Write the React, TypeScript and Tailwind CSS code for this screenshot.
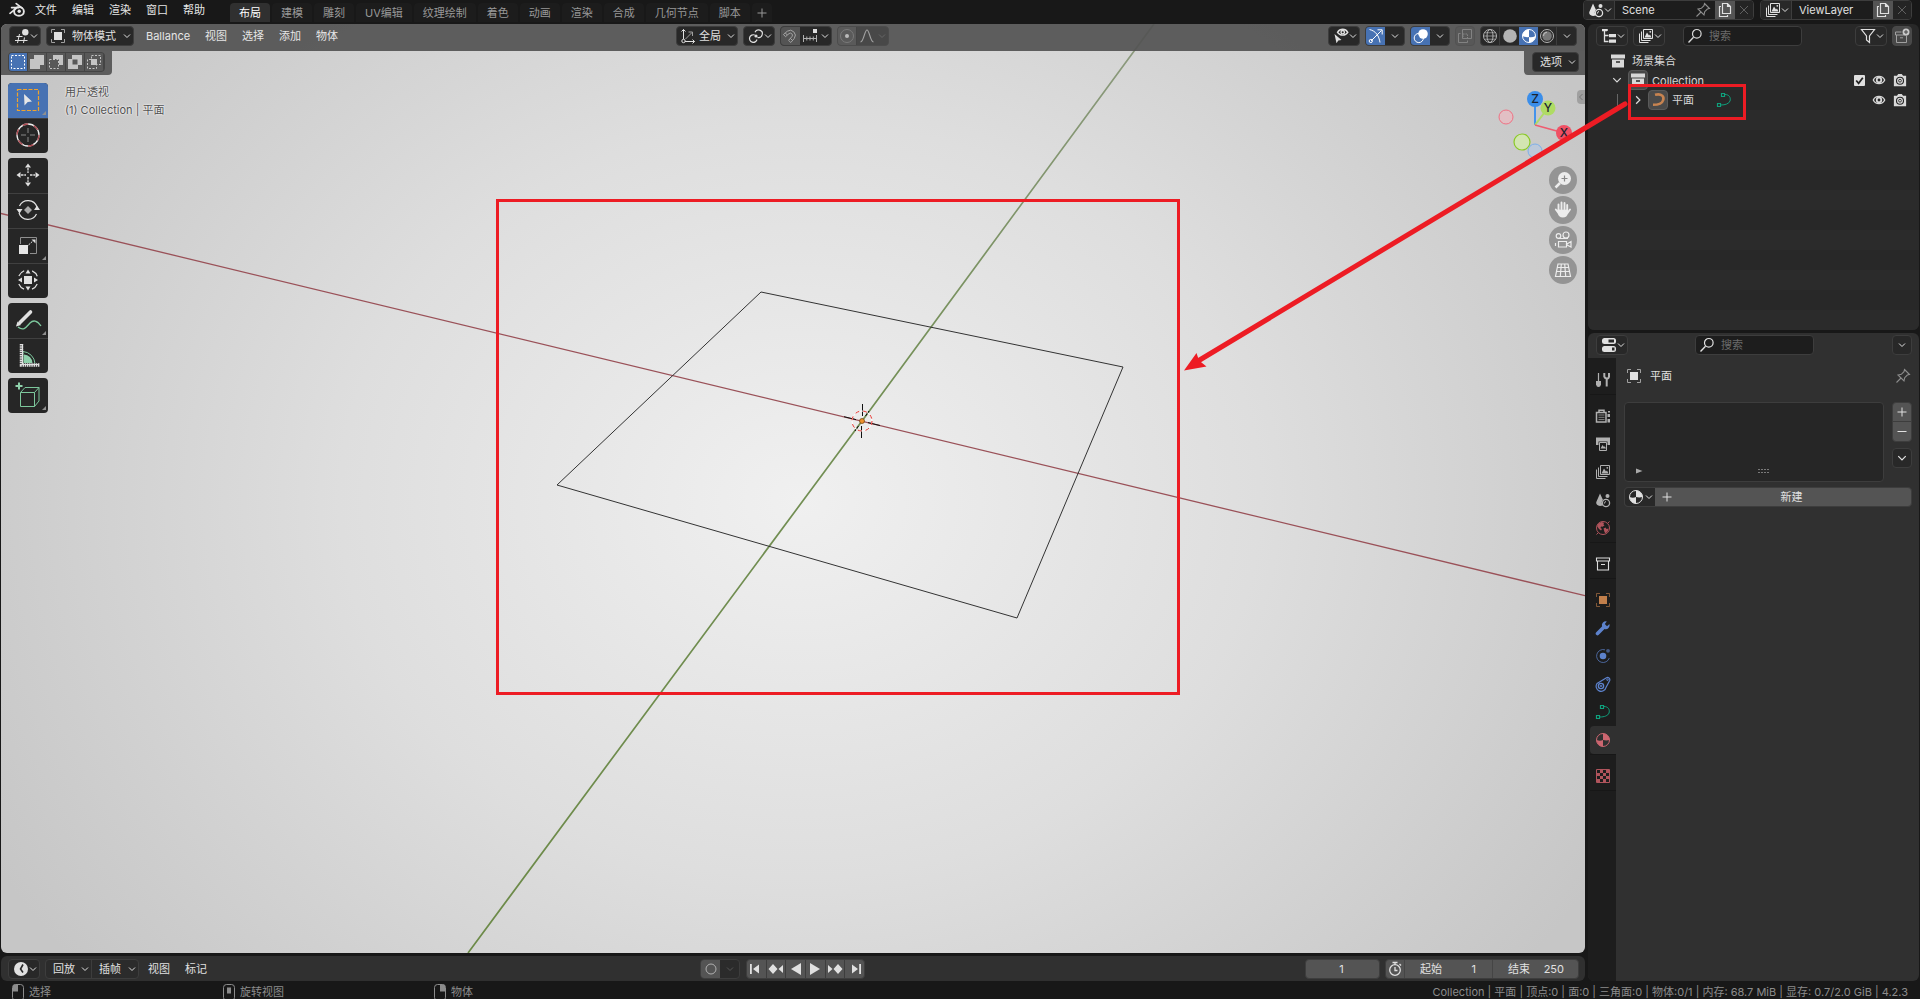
import React from 'react';

type IconProps = { className?: string; size?: number; box?: number; children: React.ReactNode };

function Icon({ className = '', size = 16, box = 16, children }: IconProps) {
  return (
    <svg
      width={size}
      height={size}
      viewBox={`0 0 ${box} ${box}`}
      fill="none"
      stroke="currentColor"
      strokeWidth="1"
      className={`shrink-0 ${className}`}
      aria-hidden="true"
    >
      {children}
    </svg>
  );
}

const Chevron = ({ className = '', size = 8 }: { className?: string; size?: number }) => (
  <Icon size={size} box={8} className={className}>
    <path d="M1 2.500 4 5.500 7 2.500" />
  </Icon>
);

const Blender = () => (
  <Icon size={18} box={18}>
    <path d="M2 12.300 9.400 6.400M3.600 6.600h7M8.200 2.600l6 4.600" strokeWidth="1.700" strokeLinecap="round" />
    <ellipse cx="11" cy="10.400" rx="4.900" ry="4.300" strokeWidth="1.900" />
    <circle cx="11.200" cy="10.200" r="1.700" fill="currentColor" stroke="none" />
  </Icon>
);
const EditorGrid = () => (
  <Icon>
    <path d="M1 12.500h12.500M2.500 8.500h6M5.500 6 3.500 15M10.500 9.500 9.500 15" />
    <circle cx="11.300" cy="4.300" r="3.200" fill="currentColor" stroke="none" />
  </Icon>
);
const ObjectMode = () => (
  <Icon>
    <path d="M1.500 5V1.500H5M11 1.500h3.500V5M14.500 11v3.500H11M5 14.500H1.500V11" className="text-[#a0a0a0]" />
    <path d="M4 4h8v8H4z" fill="currentColor" stroke="none" />
  </Icon>
);
const Axes = () => (
  <Icon>
    <path d="M3.500 11V1.500M1.500 3.500l2-2 2 2M5 13.500h9.500M12.500 11.500l2 2-2 2" />
    <circle cx="3.500" cy="13" r="1.700" />
    <path d="M5.500 11 12 4.500M8.500 4H12.500v4" className="text-[#a0a0a0]" />
  </Icon>
);
const Pivot = () => (
  <Icon>
    <path d="M6.700 7A3.800 3.800 0 1 0 9 11.500M7 4.300A3.800 3.800 0 1 1 9.500 9.400" strokeWidth="1.200" />
    <circle cx="8" cy="8" r="1.600" fill="currentColor" stroke="none" />
  </Icon>
);
const Magnet = () => (
  <Icon className="text-[#a4a4a4]">
    <path d="M1.500 6.500 5.300 3.200a5.100 5.100 0 0 1 7 7.200L8.800 14.500 6.600 12.400 10 8.500A2.100 2.100 0 0 0 7 5.600L3.500 8.700zM3.300 4.900l2 2.100M8.300 10.300l2.200 2.200" />
  </Icon>
);
const SnapTo = () => (
  <Icon>
    <path d="M1.500 7v7M14.500 7v7M1.500 10.500h13M4.800 8.500v4M8 8.500v4M11.300 8.500v4" className="text-[#b0b0b0]" />
    <path d="M11 1h4v4h-4z" fill="currentColor" stroke="none" />
  </Icon>
);
const EyeCursor = () => (
  <Icon>
    <path d="M4.500 4.300C7 .3 12.500 .3 14.800 4.300 12.500 8 7 8 4.500 4.300z" strokeWidth="1.400" />
    <circle cx="9.700" cy="4.200" r="1.700" strokeWidth="1.400" />
    <path d="M1.500 6 8.500 12l-3.200.4-1.800 2.800z" fill="currentColor" stroke="none" />
  </Icon>
);
const Gizmo = () => (
  <Icon>
    <path d="M1.500 1.500C8 3 11 8 12 14.500M3 13 13.500 2.500M9.500 1.800h4.700v4.700" />
    <circle cx="2.800" cy="13" r="1.600" />
  </Icon>
);
const Overlay = () => (
  <Icon>
    <circle cx="5.800" cy="10" r="4.600" />
    <circle cx="10" cy="6" r="4.800" fill="currentColor" stroke="none" />
    <path d="M5.500 7.500a5 5 0 0 0 3.500 5" stroke="#4772b3" />
  </Icon>
);
const Xray = () => (
  <Icon className="text-[#828282]">
    <path d="M5.500 1.500h9v9h-9zM1.500 5.500v9h9v-2M1.500 5.500h2" />
    <path d="M6 6h4.500v4.500H6z" strokeDasharray="1.500 1" />
  </Icon>
);
const Wire = () => (
  <Icon className="text-[#b4b4b4]">
    <circle cx="8" cy="8" r="6.500" />
    <ellipse cx="8" cy="8" rx="3" ry="6.500" />
    <path d="M1.500 8h13M2.500 4.800h11M2.500 11.200h11" strokeWidth=".7" />
  </Icon>
);
const Solid = () => (
  <Icon className="text-[#b4b4b4]">
    <circle cx="8" cy="8" r="6.800" fill="currentColor" stroke="none" />
  </Icon>
);
const Material = () => (
  <Icon>
    <circle cx="8" cy="8" r="6.500" />
    <path d="M8 1.500A6.500 6.500 0 0 1 14.500 8Q11.500 8.800 8 8zM8 8Q5 9.500 1.500 8A6.500 6.500 0 0 0 8 14.500z" fill="currentColor" stroke="none" />
  </Icon>
);
const MaterialShade = () => (
  <Icon>
    <circle cx="8" cy="8" r="6.500" />
    <path d="M8 1.500A6.500 6.500 0 0 0 1.500 8Q5 9.500 8 9z" fill="currentColor" stroke="none" />
    <path d="M8 9q3 .8 6.500-1A6.500 6.500 0 0 1 8 14.500z" fill="currentColor" stroke="none" />
  </Icon>
);
const Rendered = () => (
  <Icon className="text-[#b4b4b4]">
    <circle cx="8" cy="8" r="6.500" />
    <circle cx="8" cy="8" r="4.800" fill="#777" stroke="none" />
    <path d="M4.500 8A3.500 3.500 0 0 1 8 4.300" strokeWidth="1.300" />
  </Icon>
);
const SceneIcon = () => (
  <Icon>
    <path d="M5 1.500 1.200 10.300Q1 13.500 5 14L8 13.500Q5.500 10 8 8z" fill="currentColor" stroke="none" />
    <circle cx="12.500" cy="4" r="2" fill="currentColor" stroke="none" />
    <circle cx="11" cy="11" r="3.600" strokeWidth="1.300" />
    <path d="M9.500 11.500a1.800 1.800 0 0 1 1.500-2" />
  </Icon>
);
const ViewLayerIcon = () => (
  <Icon>
    <path d="M5.500 1.500h9v9h-9zM3.500 3.500v9h9M1.500 5.500v9h9" />
    <path d="M6.500 9.500 9 4.500l2 3 1-1 1.500 3z" fill="currentColor" stroke="none" />
    <circle cx="12.300" cy="3.800" r=".9" fill="currentColor" stroke="none" />
  </Icon>
);
const Pin = () => (
  <Icon className="text-[#8c8c8c]">
    <path d="M9.500 1.500 14.500 6.500 12.300 7 9.700 9.700 9 13 3 7 6.300 6.300 9 3.700zM6 10 1.500 14.500" strokeWidth="1.100" />
  </Icon>
);
const Copy = () => (
  <Icon>
    <path d="M5.500 1.500h5l3 3v7h-8zM10.500 1.500v3h3M4 4.500H2.500v10h8V13" strokeWidth="1.200" />
  </Icon>
);
const Cross = () => (
  <Icon size={12} box={12} className="text-[#606060]">
    <path d="m2 2 8 8M10 2 2 10" />
  </Icon>
);
const Tree = () => (
  <Icon>
    <path d="M1 2h6M3.500 2v11.500h4M3.500 7.500h4" strokeWidth="1.300" />
    <path d="M1 1h5v2.200H1zM8 6h7v3.200H8zM8 11.500h7v3.200H8z" fill="currentColor" stroke="none" />
  </Icon>
);
const Search = () => (
  <Icon>
    <circle cx="9.800" cy="5.800" r="4.300" strokeWidth="1.200" />
    <path d="M6.500 9.200 1.500 14.500" strokeWidth="1.400" />
  </Icon>
);
const Funnel = () => (
  <Icon>
    <path d="M1.500 1.500h13L9.500 8v6.500L6.500 12V8z" strokeWidth="1.200" />
  </Icon>
);
const NewCollection = () => (
  <Icon className="text-[#a0a0a0]">
    <path d="M1.500 4h6M1.500 4v3h12M2.500 7v7.500h10V8M6 9.800h3" />
    <circle cx="12" cy="4" r="3.500" fill="#c8c8c8" stroke="none" />
    <path d="M12 2v4M10 4h4" stroke="#444" />
  </Icon>
);
const CollectionFull = () => (
  <Icon>
    <path d="M1 1.500h14v4H1z M2 6.500h12v8H2z" fill="currentColor" stroke="none" />
    <path d="M6 9h4" stroke="#282828" strokeWidth="1.600" />
  </Icon>
);
const CollectionLine = () => (
  <Icon>
    <path d="M1.500 2h13v3h-13zM2.500 5.500v8.500h11V5.500M6 8.500h4" strokeWidth="1.100" />
  </Icon>
);
const Eye = () => (
  <Icon size={14}>
    <path d="M1.500 8C4 2.500 12 2.500 14.500 8 12 13.500 4 13.500 1.500 8z" strokeWidth="1.500" />
    <circle cx="8" cy="8" r="2.600" strokeWidth="2" />
  </Icon>
);
const Camera = () => (
  <Icon size={14}>
    <path d="M1 3h3.500L6 1h4l1.500 2H15v12H1z" fill="currentColor" stroke="none" />
    <circle cx="8" cy="8.800" r="4" stroke="#282828" strokeWidth="1.300" />
    <circle cx="8" cy="8.800" r="1.600" stroke="#282828" />
  </Icon>
);
const CurveObject = () => (
  <Icon className="text-[#c78350]">
    <path d="M5 2.800C12 1 14.500 5 13 8.500 12 12 8 12.800 3 12.800" strokeWidth="2.600" />
  </Icon>
);
const CurveData = ({ className = '' }: { className?: string }) => (
  <Icon className={`text-[#0fa07c] ${className}`}>
    <path d="M5.500 1.500h3v3h-3zM1.500 11.500h3v3h-3z" strokeWidth="1.200" />
    <path d="M9 2.500C13.500 2.500 15 6 14 9c-1 2.800-5 4-9 4" />
  </Icon>
);
const Props = () => (
  <Icon>
    <rect x="1" y="1" width="14" height="6" rx="2.500" fill="currentColor" stroke="none" />
    <rect x="1" y="9" width="14" height="6" rx="2.500" fill="currentColor" stroke="none" />
    <path d="M7.500 2.500h5.500v3H7.500zM11 10.500h2.500v3H11z" fill="#282828" stroke="none" />
  </Icon>
);
const Tool = () => (
  <Icon>
    <path d="M3.500 1v8" strokeWidth="1.200" />
    <path d="M1 9h5v3.500Q5.500 15 3.500 15T1 12.500z" fill="currentColor" stroke="none" />
    <path d="M9.300 1v3.500Q9.500 6 11.500 6.500T14 4.500V1M11.700 6v8.500" strokeWidth="2" />
  </Icon>
);
const RenderTab = () => (
  <Icon>
    <path d="M1.500 4.500h9.500v9.500H1.500z" strokeWidth="1.500" />
    <path d="M4 4V2.200h5V4" strokeWidth="1.500" />
    <path d="M3.500 7h6M3.500 9.300h6M3.500 11.600h6" strokeWidth=".7" />
    <path d="M13 3h2v1.500h-2zM12.500 6H15v3h-2.500zM12.500 11H15v3.500h-2.500z" fill="currentColor" stroke="none" />
  </Icon>
);
const OutputTab = () => (
  <Icon>
    <path d="M1 1.500h14V9h-2.500V5.500h-9V9H1z" fill="currentColor" stroke="none" />
    <path d="M4.500 6.500h7v8h-7z" />
    <path d="M5.500 12.500 7.500 9l1.500 2 .8-.7 1.200 2.200z" fill="currentColor" stroke="none" />
  </Icon>
);
const World = () => (
  <Icon className="text-[#b0545c]">
    <circle cx="8" cy="8" r="6.500" />
    <path d="M2 6 3.500 3.500 6.500 2l2.500.8-.5 1.700 1 1-2 1.300-1.500-.3-.5 1.500 1.500 1-1 1.500L4 9z" fill="currentColor" stroke="none" />
    <path d="m8.500 8.500 2-1 1 1.500 2-.5-.5 2.500-2.500 2.500-1-1.500z" fill="currentColor" stroke="none" />
    <path d="m1.500 14.500 1.800-1.800M12.700 3.300l1.800-1.800" />
  </Icon>
);
const ObjectTab = () => (
  <Icon className="text-[#c17f4b]">
    <path d="M1.500 5V1.500H5M11 1.500h3.500V5M14.500 11v3.500H11M5 14.500H1.500V11" opacity=".6" />
    <path d="M4 4h8v8H4z" fill="currentColor" stroke="none" />
  </Icon>
);
const Wrench = () => (
  <Icon className="text-[#5d82cc]">
    <path d="M2.500 13.500 8.500 7.500" strokeWidth="3.600" strokeLinecap="round" />
    <path d="M11.800 1.500A4 4 0 0 0 7 6.500L9.500 9a4 4 0 0 0 5-5L12 6.300 9.800 4z" fill="currentColor" stroke="none" />
  </Icon>
);
const Physics = () => (
  <Icon className="text-[#5d82cc]">
    <circle cx="8" cy="8" r="3.300" fill="currentColor" stroke="none" />
    <path d="M10 1.800A6.500 6.500 0 1 0 14.300 10" opacity=".7" />
    <circle cx="13" cy="2.800" r="1.900" fill="currentColor" stroke="none" opacity=".6" />
  </Icon>
);
const Constraint = () => (
  <Icon className="text-[#5d82cc]">
    <circle cx="6" cy="10" r="2.600" strokeWidth="1.400" />
    <circle cx="6" cy="10" r="1" fill="currentColor" stroke="none" />
    <path d="M2 7.500 11.500 1.700a2.300 2.300 0 0 1 3.200 2.800L11 11.500A5 5 0 1 1 2 7.500z" strokeWidth="1.200" />
    <circle cx="12.500" cy="3.700" r=".8" />
  </Icon>
);
const MaterialTab = () => (
  <Icon className="text-[#cc6670]">
    <circle cx="8" cy="8" r="6.500" />
    <path d="M8 1.500A6.500 6.500 0 0 1 14.500 8Q11.500 8.800 8 8zM8 8Q5 9.500 1.500 8A6.500 6.500 0 0 0 8 14.500z" fill="currentColor" stroke="none" />
  </Icon>
);
const Texture = () => (
  <Icon className="text-[#b0545c]">
    <path d="M1.500 1.500h13v13h-13z" />
    <path
      d="M5 2h3v3H5zM11 2h3v3h-3zM2 5h3v3H2zM8 5h3v3H8zM5 8h3v3H5zM11 8h3v3h-3zM2 11h3v3H2zM8 11h3v3H8z"
      fill="currentColor"
      stroke="none"
    />
  </Icon>
);
const Clock = () => (
  <Icon>
    <circle cx="8" cy="8" r="7" fill="currentColor" stroke="none" />
    <path d="M10 3.500 7.500 8 10 11.500" stroke="#282828" strokeWidth="1.600" />
  </Icon>
);
const Stopwatch = () => (
  <Icon>
    <circle cx="8" cy="9" r="5.300" strokeWidth="1.300" />
    <path d="M8 6v3.500h2.500M5.500 1.500h5M8 1.500v2M12.500 3l1.500 1.500" strokeWidth="1.300" />
  </Icon>
);

const boxed = 'flex h-5 items-center rounded border border-[#3d3d3d] bg-[#282828] text-[#e0e0e0]';

function MenuButton({ label, className = 'w-8', children }: { label: string; className?: string; children: React.ReactNode }) {
  return (
    <button type="button" aria-label={label} className={`${boxed} shrink-0 justify-between pr-0.5 pl-1 ${className}`}>
      {children}
      <Chevron />
    </button>
  );
}

function SearchBox({ id, className }: { id: string; className: string }) {
  return (
    <label htmlFor={id} className={`flex h-5 items-center gap-1.5 rounded border border-[#3d3d3d] bg-[#1d1d1d] pl-[3px] ${className}`}>
      <Search />
      <input id={id} type="search" aria-label="搜索" placeholder="搜索" className="w-full min-w-0 bg-transparent outline-none placeholder:text-[#6a6a6a]" />
    </label>
  );
}

const workspaces = ['布局', '建模', '雕刻', 'UV编辑', '纹理绘制', '着色', '动画', '渲染', '合成', '几何节点', '脚本'];

function DataBlock({ id, value, className, pin, icon }: { id: string; value: string; className: string; pin?: boolean; icon: React.ReactNode }) {
  return (
    <div className={`flex h-5 items-center overflow-hidden rounded border border-[#3d3d3d] bg-[#1d1d1d] ${className}`}>
      <button type="button" aria-label={`浏览 ${value}`} className="flex h-full w-[31px] shrink-0 items-center justify-between border-r border-[#3d3d3d] bg-[#282828] pr-0.5 pl-1">
        {icon}
        <Chevron />
      </button>
      <input id={id} aria-label={value} defaultValue={value} className="w-full min-w-0 flex-1 bg-transparent pl-[7px] outline-none" />
      {pin && (
        <button type="button" aria-label="固定" className="mr-1"><Pin /></button>
      )}
      <button type="button" aria-label="新建副本" className="flex h-full w-5 items-center justify-center bg-[#545454]"><Copy /></button>
      <button type="button" aria-label="删除" className="flex h-full w-[18px] items-center justify-center bg-[#242424]"><Cross /></button>
    </div>
  );
}

function TopBar() {
  return (
    <header className="flex h-6 shrink-0 justify-between pr-2">
      <div className="flex">
        <nav className="flex h-5 items-center gap-[15px] pl-2 text-[#e6e6e6]">
          <button type="button" aria-label="Blender" className="-mr-[6px]"><Blender /></button>
          {['文件', '编辑', '渲染', '窗口', '帮助'].map((t) => (
            <button key={t} type="button">{t}</button>
          ))}
        </nav>
        <nav className="ml-[25px] flex items-start gap-0.5 pt-[3px] text-[#989898]">
          {workspaces.map((t, i) => (
            <button key={t} type="button" className={`h-[19px] rounded-t px-[9px] ${i === 0 ? 'bg-[#303030] text-white' : 'bg-[#1c1c1c]'}`}>
              {t}
            </button>
          ))}
          <button type="button" aria-label="添加工作区" className="flex h-[19px] w-5 items-center justify-center rounded-t bg-[#1c1c1c]">
            <Icon size={10} box={10}><path d="M5 .5v9M.5 5h9" /></Icon>
          </button>
        </nav>
      </div>
      <div className="flex gap-1.5">
        <DataBlock id="scene" value="Scene" pin icon={<SceneIcon />} className="w-[171px]" />
        <DataBlock id="layer" value="ViewLayer" icon={<ViewLayerIcon />} className="w-[152px]" />
      </div>
    </header>
  );
}

function Scene3D() {
  return (
    <svg className="absolute inset-0 h-full w-full" viewBox="1 24 1584 929" preserveAspectRatio="none" fill="none" aria-hidden="true">
      <defs>
        <radialGradient id="studio" gradientUnits="userSpaceOnUse" cx="800" cy="500" r="920" gradientTransform="translate(0 90) scale(1 .82)">
          <stop offset="0" stopColor="#f0f0f0" />
          <stop offset=".5" stopColor="#dedede" />
          <stop offset="1" stopColor="#c6c6c6" />
        </radialGradient>
        <linearGradient id="axisY" gradientUnits="userSpaceOnUse" x1="468" y1="953" x2="1154" y2="24">
          <stop offset="0" stopColor="#6c8a48" />
          <stop offset=".6" stopColor="#738f55" />
          <stop offset="1" stopColor="#8d9a80" />
        </linearGradient>
      </defs>
      <path d="M1 24h1584v929H1z" fill="url(#studio)" />
      <path d="M0 213.300 1585 595.700" stroke="#9a5158" strokeWidth="1.300" />
      <path d="M468 953 862 421 1154 24" stroke="url(#axisY)" strokeWidth="1.700" />
      <path d="M761 292 1123 367 1017 618 557 485z" stroke="#333" strokeWidth="1" />
      <path d="M844 416.700 856 419.600M868 422.600 880 425.500M855 431l3.500-5M865.500 416l3.500-5M862.500 404v12M861.500 426v12" stroke="#111" />
      <circle cx="862" cy="421" r="10" stroke="#fff" strokeWidth="1" />
      <circle cx="862" cy="421" r="10" stroke="#e5342f" strokeWidth="1" strokeDasharray="4 4" />
      <circle cx="862" cy="421" r="2.500" fill="#f0922c" stroke="#6b4010" strokeWidth=".7" />
    </svg>
  );
}

function ViewHeader() {
  return (
    <div className="relative flex h-[27px] items-start bg-[#535353]/92 pt-0.5 pr-2 pl-2 text-[#e6e6e6]">
      <div className="flex flex-1 items-center gap-[5px]">
        <MenuButton label="编辑器类型"><EditorGrid /></MenuButton>
        <label htmlFor="mode" className={`${boxed} w-[88px] gap-1.5 pr-0.5 pl-[3px]`}>
          <ObjectMode />
          <select id="mode" aria-label="模式" className="min-w-0 flex-1 appearance-none bg-transparent outline-none"><option>物体模式</option></select>
          <Chevron />
        </label>
        <nav className="ml-[7px] flex gap-[15px]">
          {['Ballance', '视图', '选择', '添加', '物体'].map((t) => (
            <button key={t} type="button">{t}</button>
          ))}
        </nav>
      </div>
      <div className="mr-[22px] flex gap-[5px]">
        <label htmlFor="orient" className={`${boxed} w-[62px] justify-between pr-0.5 pl-[3px]`}>
          <Axes />
          <select id="orient" aria-label="变换坐标系" className="w-6 shrink-0 appearance-none bg-transparent outline-none"><option>全局</option></select>
          <Chevron />
        </label>
        <MenuButton label="轴心点"><Pivot /></MenuButton>
        <div className={`${boxed} w-[52px] overflow-hidden`}>
          <button type="button" aria-label="吸附" className="flex h-full w-[19px] items-center justify-center bg-[#545454]"><Magnet /></button>
          <button type="button" aria-label="吸附至" className="flex h-full flex-1 items-center justify-between pr-0.5 pl-0.5"><SnapTo /><Chevron /></button>
        </div>
        <div className="flex h-5 w-[52px] items-center overflow-hidden rounded border border-[#4c4c4c] bg-[#484848]">
          <button type="button" aria-label="衰减编辑" className="flex h-full w-[19px] items-center justify-center border-r border-[#444] bg-[#5a5a5a]">
            <Icon className="text-[#7a7a7a]"><circle cx="8" cy="8" r="6.500" /><circle cx="8" cy="8" r="2" fill="#bbb" stroke="none" /></Icon>
          </button>
          <button type="button" aria-label="衰减" className="flex h-full flex-1 items-center justify-between px-0.5">
            <Icon className="text-[#a0a0a0]"><path d="M1.500 14C5 13.500 5.500 2 8 2s3 11.500 6.500 12" strokeWidth="1.200" /></Icon>
            <Chevron className="text-[#666]" />
          </button>
        </div>
      </div>
      <div className="flex flex-1 justify-end gap-[5px]">
        <MenuButton label="可见性"><EyeCursor /></MenuButton>
        {[
          { n: 'Gizmo', i: <Gizmo /> },
          { n: '叠加层', i: <Overlay /> },
        ].map((b) => (
          <div key={b.n} className={`${boxed} w-10 overflow-hidden`}>
            <button type="button" aria-label={b.n} className="flex h-full w-[19px] items-center justify-center bg-[#4772b3] text-white">{b.i}</button>
            <button type="button" aria-label={`${b.n} 选项`} className="flex h-full flex-1 items-center justify-center"><Chevron /></button>
          </div>
        ))}
        <button type="button" aria-label="透视模式" className="flex h-5 w-5 items-center justify-center rounded border border-[#525252] bg-[#585858]"><Xray /></button>
        <div className={`${boxed} w-[97px] overflow-hidden`}>
          <button type="button" aria-label="线框" className="flex h-full w-[19px] items-center justify-center border-r border-[#3d3d3d]"><Wire /></button>
          <button type="button" aria-label="实体" className="flex h-full w-[19px] items-center justify-center"><Solid /></button>
          <button type="button" aria-label="材质预览" className="flex h-full w-[19px] items-center justify-center bg-[#4772b3] text-white"><MaterialShade /></button>
          <button type="button" aria-label="渲染预览" className="flex h-full w-[19px] items-center justify-center border-r border-[#3d3d3d]"><Rendered /></button>
          <button type="button" aria-label="着色选项" className="flex h-full flex-1 items-center justify-center"><Chevron /></button>
        </div>
      </div>
    </div>
  );
}

const selectModes = [
  { n: '设置', i: <path d="M1.500 1.500h13v13h-13z" strokeDasharray="2 1.500" stroke="#fff" /> },
  { n: '扩展', i: <path d="M5 1h10v10h-4v4H1V5h4z" fill="currentColor" stroke="none" /> },
  { n: '相减', i: <><path d="M5 1h10v10h-4V5H5z" fill="currentColor" stroke="none" /><path d="M1.500 5.500h9v9h-9z" strokeDasharray="2 1.500" /></> },
  { n: '反转', i: <path d="M5 1h10v10h-4v4H1V5h4zM5.500 5.500v5h5v-5z" fill="currentColor" fillRule="evenodd" stroke="none" /> },
  { n: '相交', i: <><path d="M5.500 1.500h9v9h-4v4h-9v-9h4z" strokeDasharray="2 1.500" /><path d="M5 5h6v6H5z" fill="currentColor" stroke="none" /></> },
];

const tri = <path d="M39 28v4h-4z" fill="#8f8f8f" stroke="none" />;
const toolGroups = [
  [
    {
      n: '框选',
      i: <><path d="M10.500 6.500h21v21h-21z" stroke="#f0a32c" strokeDasharray="4 1.500" strokeWidth="1.200" /><path d="m17 11 8 7.500-4.300.5-3.200 3.500z" fill="#e6e6e6" stroke="none" />{tri}</>,
    },
    {
      n: '游标',
      i: <><circle cx="21" cy="17" r="11" stroke="#eee" strokeWidth="1.300" /><circle cx="21" cy="17" r="11" stroke="#a8444b" strokeWidth="1.300" strokeDasharray="5.700 5.800" /><path d="M14 17h5M23 17h5M21 10v5M21 19v5" stroke="#888" /></>,
    },
  ],
  [
    {
      n: '移动',
      i: <><path d="M21 10v5M21 19v5M14 17h5M23 17h5" strokeWidth="1.300" strokeDasharray="2.500 .8" /><path d="m21 5.500 3 4h-6zM21 28.500l3-4h-6zM9.500 17l4-3v6zM32.500 17l-4-3v6z" fill="currentColor" stroke="none" /></>,
    },
    {
      n: '旋转',
      i: <><path d="M12.500 13a9.500 9.500 0 0 1 17.500 1M29.500 21a9.500 9.500 0 0 1-17.500-1" strokeWidth="1.200" /><path d="m21 13 4 4-4 4-4-4z" fill="#aaa" stroke="none" /><path d="M9.500 16h6l-3 4.500zM27 17h6l-3-4.500z" fill="currentColor" stroke="none" /></>,
    },
    {
      n: '缩放',
      i: <><path d="M13.500 16V9.500h16v16H23" stroke="#8f8f8f" /><path d="M12 17h9v9h-9z" fill="#e6e6e6" stroke="none" /><path d="m21.500 17 5-4.500" strokeDasharray="2 1" /><path d="M24.500 11.500h4v4z" fill="currentColor" stroke="none" />{tri}</>,
    },
    {
      n: '变换',
      i: <><circle cx="21" cy="17" r="10" strokeWidth="1.200" strokeDasharray="7.500 8.200" strokeDashoffset="-4" /><path d="M17 13h8v8h-8zM21 6.500l2.500 4h-5zM21 27.500l2.500-4h-5zM11 17l4-2.500v5zM31 17l-4-2.500v5z" fill="currentColor" stroke="none" /></>,
    },
  ],
  [
    {
      n: '标注',
      i: <><path d="M13 19.500 23.500 9" strokeWidth="3.600" strokeLinecap="round" /><path d="m9 23.500 1.500-5 3.500 3.500z" fill="currentColor" stroke="none" /><path d="M11 24c6 5 9-1 12-4s7-3 11 3" stroke="#7cc79c" strokeWidth="1.300" />{tri}</>,
    },
    {
      n: '测量',
      i: <><path d="M16 27V13.500a13 13 0 0 1 12 12" stroke="#7cc79c" /><path d="M17 25v-8.500a9 9 0 0 1 8.500 8.500z" fill="#8fd1ab" stroke="none" /><path d="M14.500 6v21h18" strokeWidth="3.500" strokeDasharray="1.500 .7" /><path d="M15.500 6v20.500H32" strokeWidth="1" /></>,
    },
  ],
  [
    {
      n: '添加立方体',
      i: <><path d="M13.500 14.500h14v14h-14zM13.500 14.500l4.500-5h14l-4.500 5M32 9.500v13.500l-4.500 5.500" stroke="#7cc79c" /><path d="M12 4.500v7M8.500 8h7" stroke="#8fd1ab" strokeWidth="2" />{tri}</>,
    },
  ],
];

const navButtons = [
  { n: '缩放视图', i: <><circle cx="15.500" cy="12.500" r="6.500" fill="currentColor" stroke="none" /><path d="m11 17-4.500 4.500" strokeWidth="2.500" /><path d="M15.500 9.500v6M12.500 12.500h6" stroke="#888" strokeWidth="1.200" /></> },
  { n: '平移视图', i: <><path d="M9.500 14V8.500M12.500 13V6.500M15.500 13V7M18.200 14V9M9.500 17 6.800 13.500" strokeWidth="1.900" strokeLinecap="round" /><path d="M8.500 13.500h10.600v3.500q-1 4.500-5.300 4.500t-5.300-5z" fill="currentColor" stroke="none" /><path d="m18.500 17 2.500-3.500" strokeWidth="1.900" strokeLinecap="round" /></> },
  { n: '摄像机视图', i: <><circle cx="9.500" cy="10" r="2.300" strokeWidth="1.200" /><circle cx="17" cy="9" r="3" strokeWidth="1.200" /><path d="M9 12.500h10M9.500 15.500h8v5.500h-8zM6.500 17v3M18 18l4-2.500v5.500L18 19" strokeWidth="1.200" /></> },
  { n: '切换透视', i: <path d="M9 8h10l2.500 12.500h-15zM8 11.500h12M7.500 15.500h13M12.300 8l-1 12.500M15.700 8l1 12.500" strokeWidth="1.200" /> },
];

function AxisGizmo() {
  return (
    <svg width="76" height="72" viewBox="1498 90 76 72" className="text-[12px] font-medium" fill="none" aria-label="视图轴">
      <path d="M1535 125V99" stroke="#4493ec" strokeWidth="2" />
      <path d="M1535 125 1548 108" stroke="#afdb64" strokeWidth="2" />
      <path d="M1535 125 1564 133" stroke="#ef5c70" strokeWidth="1.500" />
      <circle cx="1506" cy="117" r="7" fill="#e2bfc4" stroke="#ef7284" />
      <circle cx="1522" cy="142" r="8" fill="#d3e5b2" stroke="#8ac926" strokeWidth="1.200" />
      <circle cx="1535" cy="151" r="7" fill="#bcc9da" stroke="#7cb0ea" />
      <circle cx="1548" cy="108" r="7.500" fill="#afdb64" />
      <circle cx="1564" cy="133" r="8" fill="#ef5064" />
      <circle cx="1535" cy="99" r="8" fill="#3b8eea" />
      <g fill="#1c2430" fontFamily="Inter, sans-serif" textAnchor="middle">
        <text x="1535" y="103">Z</text>
        <text x="1548" y="112">Y</text>
        <text x="1564" y="137">X</text>
      </g>
    </svg>
  );
}

const outline = '[text-shadow:0_0_2px_#f2f2f2,0_0_2px_#f2f2f2,0_0_1px_#f2f2f2]';

function Viewport() {
  return (
    <section className="relative flex min-h-0 flex-1 flex-col overflow-hidden rounded-md">
      <Scene3D />
      <ViewHeader />
      <div className="relative flex items-start justify-between">
        <div className="flex h-6 w-[111px] rounded-br bg-[#5d5d5d] pt-px pl-[7px]">
          <div className="flex h-5 overflow-hidden rounded border border-[#444] bg-[#444]">
            {selectModes.map((m, k) => (
              <button key={m.n} type="button" aria-label={m.n} className={`flex w-[19px] items-center justify-center border-r border-[#444] text-[#c4c4c4] ${k === 0 ? 'bg-[#4772b3]' : 'bg-[#585858]'}`}>
                <Icon>{m.i}</Icon>
              </button>
            ))}
          </div>
        </div>
        <div className="flex h-6 w-[61px] rounded-bl bg-[#5d5d5d] pt-px pl-2">
          <button type="button" className={`${boxed} w-[47px] justify-between pr-0.5 pl-[7px]`}>选项<Chevron /></button>
        </div>
      </div>
      <div className="relative flex justify-between pt-2">
        <div className="flex">
          <div className="ml-[7px] flex w-10 flex-col gap-[5px]">
            {toolGroups.map((g, gi) => (
              <div key={gi} className="flex flex-col overflow-hidden rounded bg-[#262626] text-[#e0e0e0]">
                {g.map((t, k) => (
                  <button key={t.n} type="button" aria-label={t.n} className={`h-[35px] ${gi === 0 && k === 0 ? 'bg-[#4772b3]' : ''} ${k > 0 ? 'border-t border-[#404040]' : ''}`}>
                    <svg viewBox={k > 0 ? '1 1 40 34' : '1 0 40 35'} className="h-full w-full" fill="none" stroke="currentColor" aria-hidden="true">{t.i}</svg>
                  </button>
                ))}
              </div>
            ))}
          </div>
          <div className={`ml-[17px] leading-[18px] text-[#505050] ${outline}`}>
            <p>用户透视</p>
            <p>(1) Collection | 平面</p>
          </div>
        </div>
        <div className="flex items-start pt-[7px]">
          <div className="flex flex-col items-end">
            <AxisGizmo />
            <div className="mt-1 -mr-[3px] flex flex-col gap-0.5">
              {navButtons.map((b) => (
                <button key={b.n} type="button" aria-label={b.n} className="flex h-7 w-7 items-center justify-center rounded-full bg-[#949494] text-[#ececec]">
                  <Icon size={28} box={28}>{b.i}</Icon>
                </button>
              ))}
            </div>
          </div>
          <button type="button" aria-label="侧栏" className="ml-[3px] flex h-3.5 w-2 items-center justify-center rounded-l bg-[#a0a0a0] text-[#777]">
            <Icon size={8} box={8}><path d="M5.500 1 2.500 4l3 3" /></Icon>
          </button>
        </div>
      </div>
    </section>
  );
}

const playback = [
  { n: '跳到开头', d: 'M2 3h1.800v10H2zM11 3.500v9L5 8z' },
  { n: '上一关键帧', d: 'M5 3l4.500 5L5 13 .5 8zM15 4v8L10.500 8z' },
  { n: '倒放', d: 'M13 2v12L3 8z' },
  { n: '播放', d: 'M3 2v12l10-6z' },
  { n: '下一关键帧', d: 'M11 3l4.500 5L11 13 6.500 8zM1 4v8l4.500-4z' },
  { n: '跳到结尾', d: 'M12.200 3H14v10h-1.800zM5 3.500v9L11 8z' },
];

function Timeline() {
  return (
    <section className="flex h-[25px] shrink-0 items-start rounded-md bg-[#303030] pt-[3px] pr-1.5 pl-[7px] text-[#e0e0e0]">
      <div className="flex flex-1 items-center gap-[5px]">
        <MenuButton label="时间线编辑器"><Clock /></MenuButton>
        <div className="flex h-5 rounded border border-[#3d3d3d] bg-[#2b2b2b]">
          <button type="button" className="flex w-[46px] items-center justify-between border-r border-[#3d3d3d] pr-0.5 pl-[7px]">回放<Chevron /></button>
          <button type="button" className="flex w-[46px] items-center justify-between pr-0.5 pl-[7px]">插帧<Chevron /></button>
        </div>
        <button type="button" className="ml-1">视图</button>
        <button type="button" className="ml-2.5">标记</button>
      </div>
      <div className="mr-[22px] flex gap-1.5">
        <div className="flex h-5 w-10 overflow-hidden rounded border border-[#3d3d3d] bg-[#2b2b2b]">
          <button type="button" aria-label="自动插帧" className="flex w-[19px] items-center justify-center bg-[#545454] text-[#b0b0b0]">
            <Icon><circle cx="8" cy="8" r="5" /></Icon>
          </button>
          <button type="button" aria-label="自动插帧选项" className="flex flex-1 items-center justify-center text-[#555]"><Chevron /></button>
        </div>
        <div className="flex h-5 w-[119px] overflow-hidden rounded border border-[#3d3d3d] bg-[#545454]">
          {playback.map((p, k) => (
            <button key={p.n} type="button" aria-label={p.n} className={`flex flex-1 items-center justify-center ${k > 0 ? 'border-l border-[#3d3d3d]' : ''}`}>
              <Icon><path d={p.d} fill="currentColor" stroke="none" /></Icon>
            </button>
          ))}
        </div>
      </div>
      <div className="flex flex-1 justify-end gap-[5px]">
        <input aria-label="当前帧" defaultValue="1" className="h-5 w-[75px] rounded border border-[#3d3d3d] bg-[#545454] pr-0.5 text-center outline-none" />
        <div className="flex h-5 w-[194px] overflow-hidden rounded border border-[#3d3d3d] bg-[#545454]">
          <button type="button" aria-label="使用预览范围" className="flex w-[19px] items-center justify-center border-r border-[#454545]"><Stopwatch /></button>
          <label htmlFor="start" className="flex flex-1 items-center justify-between border-r border-[#454545] pr-4 pl-[15px]">
            <span className="shrink-0">起始</span>
            <input id="start" defaultValue="1" className="w-6 bg-transparent text-right outline-none" />
          </label>
          <label htmlFor="end" className="flex flex-1 items-center justify-between pr-3.5 pl-[15px]">
            <span className="shrink-0">结束</span>
            <input id="end" defaultValue="250" className="w-7 bg-transparent text-right outline-none" />
          </label>
        </div>
      </div>
    </section>
  );
}

const emptyRows = Array.from({ length: 11 }, (_, i) => i);

function Outliner() {
  return (
    <section className="flex h-[306px] shrink-0 flex-col overflow-hidden rounded-md bg-[#282828] text-[#d8d8d8]">
      <div className="flex h-[26px] shrink-0 items-start pt-0.5 pr-[7px] pl-2">
        <MenuButton label="大纲视图"><Tree /></MenuButton>
        <MenuButton label="显示模式" className="ml-[5px] w-8"><ViewLayerIcon /></MenuButton>
        <SearchBox id="outliner-search" className="ml-[18px] w-[119px]" />
        <MenuButton label="过滤" className="ml-auto w-8"><Funnel /></MenuButton>
        <button type="button" aria-label="新建集合" className="ml-[5px] flex h-5 w-5 items-center justify-center rounded border border-[#4a4a4a] bg-[#484848]"><NewCollection /></button>
      </div>
      <div className="min-h-0 flex-1 overflow-hidden">
        <div className="flex h-5 items-center gap-1.5 pt-px pl-[22px]"><CollectionFull />场景集合</div>
        <div className="flex h-5 items-center bg-[#2b2b2b] pr-3 pl-6">
          <button type="button" aria-label="折叠" className="mr-1.5"><Chevron size={10} /></button>
          <span className="mr-1 flex h-5 w-5 items-center justify-center rounded border border-[#5a5a5a] bg-[#484848]"><CollectionFull /></span>
          <span className="flex-1 pt-px">Collection</span>
          <span className="relative mr-[7px] flex h-[11px] w-[11px]">
            <input type="checkbox" defaultChecked aria-label="Collection 启用" className="h-[11px] w-[11px] appearance-none rounded-[1px] bg-[#e0e0e0]" />
            <svg className="pointer-events-none absolute inset-0" viewBox="0 0 10 10" fill="none" aria-hidden="true"><path d="m2 5 2.200 2.500L8 2.500" stroke="#222" strokeWidth="1.600" /></svg>
          </span>
          <span className="flex gap-[7px]"><button type="button" aria-label="隐藏 Collection"><Eye /></button><button type="button" aria-label="禁用渲染 Collection"><Camera /></button></span>
        </div>
        <div className="flex h-5 items-center pr-3 pl-[29px]">
          <span className="mr-[15px] h-3 w-px bg-[#666]" />
          <button type="button" aria-label="展开" className="mr-[5px]"><Chevron size={10} className="-rotate-90" /></button>
          <span className="mr-1 flex h-5 w-5 items-center justify-center rounded border border-[#5a5a5a] bg-[#4a4a4a]"><CurveObject /></span>
          <span>平面</span>
          <CurveData className="ml-[22px]" />
          <span className="ml-auto flex gap-[7px]"><button type="button" aria-label="隐藏 平面"><Eye /></button><button type="button" aria-label="禁用渲染 平面"><Camera /></button></span>
        </div>
        {emptyRows.map((r) => (
          <div key={r} className={`h-5 ${r % 2 === 0 ? 'bg-[#2b2b2b]' : ''}`} />
        ))}
      </div>
    </section>
  );
}

const tabGroups = [
  [{ n: '工具', i: <Tool /> }],
  [
    { n: '渲染', i: <RenderTab /> },
    { n: '输出', i: <OutputTab /> },
    { n: '视图层', i: <ViewLayerIcon /> },
    { n: '场景', i: <SceneIcon /> },
    { n: '世界环境', i: <World /> },
  ],
  [{ n: '集合', i: <CollectionLine /> }],
  [
    { n: '物体', i: <ObjectTab /> },
    { n: '修改器', i: <Wrench /> },
    { n: '物理', i: <Physics /> },
    { n: '物体约束', i: <Constraint /> },
    { n: '数据', i: <CurveData /> },
    { n: '材质', i: <MaterialTab /> },
  ],
  [{ n: '纹理', i: <Texture /> }],
];

function Properties() {
  return (
    <section className="flex min-h-0 flex-1 flex-col overflow-hidden rounded-md bg-[#303030] text-[#e0e0e0]">
      <div className="flex h-[25px] shrink-0 items-start pt-0.5 pr-[7px] pl-2">
        <MenuButton label="属性编辑器"><Props /></MenuButton>
        <SearchBox id="prop-search" className="ml-[67px] w-[119px]" />
        <button type="button" aria-label="选项" className={`${boxed} ml-auto w-5 justify-center`}><Chevron /></button>
      </div>
      <div className="flex min-h-0 flex-1">
        <nav className="flex w-7 shrink-0 flex-col bg-[#1d1d1d] pt-2 pl-0.5 text-[#b0b0b0]">
          {tabGroups.map((g, k) => (
            <div key={k} className="mb-[7px] border-b border-[#171717]">
              {g.map((t) => (
                <button key={t.n} type="button" aria-label={t.n} className={`flex h-7 w-full items-center rounded-l pl-[5px] ${t.n === '材质' ? 'bg-[#303030]' : ''} ${t.n === '集合' ? 'text-[#ddd]' : ''}`}>{t.i}</button>
              ))}
            </div>
          ))}
        </nav>
        <div className="min-w-0 flex-1 pr-[7px] pl-2">
          <div className="mt-2 flex h-5 items-center gap-2 pl-0.5">
            <ObjectMode />
            <span className="flex-1">平面</span>
            <button type="button" aria-label="固定" className="mr-px"><Pin /></button>
          </div>
          <div className="mt-4 flex items-start gap-2">
            <div className="flex h-20 flex-1 items-end rounded border border-[#3d3d3d] bg-[#262626] pb-1">
              <button type="button" aria-label="筛选" className="ml-2.5 flex h-3 flex-1 items-center text-[#aaa]"><Icon size={8} box={8}><path d="M1 1.500 7.500 4 1 6.500z" fill="currentColor" stroke="none" /></Icon></button>
              <Icon size={12} box={12} className="text-[#ccc]"><path d="M.5 4.500h11M.5 7.500h11" strokeDasharray="1 2" /></Icon>
              <span className="w-[113px]" />
            </div>
            <div className="flex flex-col">
              <div className="flex flex-col overflow-hidden rounded border border-[#3d3d3d] bg-[#545454]">
                <button type="button" aria-label="添加材质槽" className="flex h-[18px] w-[18px] items-center justify-center"><Icon size={10} box={10}><path d="M5 .5v9M.5 5h9" /></Icon></button>
                <button type="button" aria-label="移除材质槽" className="flex h-5 w-[18px] items-center justify-center border-t border-[#3d3d3d]"><Icon size={10} box={10}><path d="M.5 4.500h9" /></Icon></button>
              </div>
              <button type="button" aria-label="材质槽选项" className={`${boxed} mt-1.5 w-5 justify-center`}><Chevron size={10} /></button>
            </div>
          </div>
          <div className="mt-[5px] flex h-5 overflow-hidden rounded border border-[#3d3d3d] bg-[#545454]">
            <button type="button" aria-label="浏览材质" className="flex w-[30px] shrink-0 items-center justify-between bg-[#282828] pr-0.5 pl-[3px]"><Material /><Chevron /></button>
            <button type="button" className="flex flex-1 items-center pl-[7px]">
              <Icon size={10} box={10}><path d="M5 .5v9M.5 5h9" /></Icon>
              <span className="flex-1 text-center">新建</span>
            </button>
          </div>
        </div>
      </div>
    </section>
  );
}

const hints = [
  { t: '选择', d: 'M1 2q0-1.500 1.500-1.500H6v7H1z' },
  { t: '旋转视图', d: 'M4 3.500h4v6H4z' },
  { t: '物体', d: 'M6 .5h3.500Q11 .5 11 2v5.500H6z' },
];

function StatusBar() {
  return (
    <footer className="flex h-[18px] shrink-0 items-center justify-between overflow-hidden pt-[3px] pr-3 pl-3 text-[#8c8c8c]">
      <div className="flex">
        {hints.map((h) => (
          <div key={h.t} className="flex w-[211px] items-center gap-[5px]">
            <svg width="12" height="15" viewBox="0 0 12 15" fill="none" stroke="currentColor" aria-hidden="true">
              <rect x=".5" y=".5" width="11" height="16" rx="3" />
              <path d={h.d} fill="currentColor" stroke="none" />
            </svg>
            {h.t}
          </div>
        ))}
      </div>
      <p>Collection | 平面 | 顶点:0 | 面:0 | 三角面:0 | 物体:0/1 | 内存: 68.7 MiB | 显存: 0.7/2.0 GiB | 4.2.3</p>
    </footer>
  );
}

function Annotations() {
  return (
    <svg className="pointer-events-none absolute inset-0 h-full w-full" viewBox="0 0 1920 999" preserveAspectRatio="none" fill="none" stroke="#ed1c24" aria-hidden="true">
      <path d="M497.500 200.500h681v493h-681z" strokeWidth="3" />
      <path d="M1629.500 85.500h115v33h-115z" strokeWidth="3" />
      <path d="M1625 104 1198 361" strokeWidth="5" strokeLinecap="round" />
      <path d="m1184 370.500 12.500-17.500 2.500 7.500 7.500 6z" fill="#ed1c24" stroke="none" />
    </svg>
  );
}

export default function App() {
  return (
    <div className="relative flex h-screen flex-col overflow-hidden bg-[#181818] font-['Inter','Noto_Sans_CJK_SC',sans-serif] text-[11px] leading-4 text-[#e0e0e0]">
      <TopBar />
      <main className="mr-px ml-px flex min-h-0 flex-1 gap-[3px]">
        <div className="flex min-w-0 flex-1 flex-col gap-[3px]">
          <Viewport />
          <Timeline />
        </div>
        <aside className="flex w-[331px] shrink-0 flex-col gap-[3px]">
          <Outliner />
          <Properties />
        </aside>
      </main>
      <StatusBar />
      <Annotations />
    </div>
  );
}
